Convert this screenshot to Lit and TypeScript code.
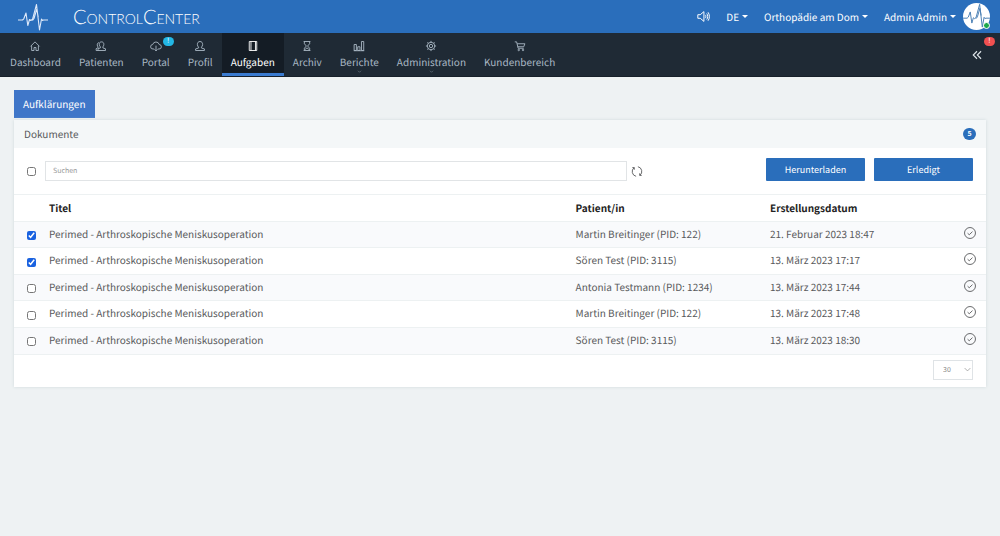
import { LitElement, html, css, svg, nothing } from "lit";
import { customElement, property, state } from "lit/decorators.js";
import { classMap } from "lit/directives/class-map.js";

const pulse = svg`<path d="M0 17h4.500l1.300-1.200L8 10l1.800 12.500 1.700-6 1.300 1 1.700-1.200L18.500 1.500l3 25.500 2-11 1 1.500 1-.5H30M14.500 17.500l1.500-2 2.800-9.500 1.400 8" />`;

const icons: Record<string, unknown> = {
  home: svg`<path d="M2 8.500 8 2.500l6 6M3.500 7.500V14h3.200v-4h2.600v4h3.200V7.500" />`,
  patients: svg`<path d="M8.700 2.500c2 0 3.100 1.400 3.100 3.300 0 1.500-.6 2.700-1.300 3.400v1.300l3.500 1.200V14H4v-2.300l3.200-1.200V9.200C6.300 8.500 5.700 7.300 5.700 5.800c0-1.900 1-3.300 3-3.300ZM5.500 3.500C3.800 3.600 3 4.800 3 6.400c0 1.300.5 2.200 1.100 2.900v1L1.500 11.600V14H4" />`,
  portal: svg`<path d="M5.500 12H4a3 3 0 0 1-.4-6A4.500 4.500 0 0 1 12.300 6 3 3 0 0 1 12 12h-1.500M8 7.500V14.500M6 12.500l2 2 2-2" />`,
  profile: svg`<path d="M8 2c2.300 0 3.500 1.600 3.500 3.900 0 1.600-.7 2.900-1.600 3.700v1.100l4 1.200V14H2.100v-2.100l4-1.200V9.600C5.200 8.800 4.500 7.500 4.500 5.900 4.500 3.600 5.700 2 8 2Z" />`,
  tasks: svg`<path d="M3 2h10v12H3zM5.300 2v12M11.300 2v12" />`,
  archive: svg`<path d="M3.500 2h9M3.500 14h9M4.500 2v3l2.700 3-2.700 3v3M11.500 2v3L8.800 8l2.700 3v3M5.500 12.500 8 10.500l2.500 2" />`,
  reports: svg`<path d="M1.500 6h3v8h-3zM6.300 9h3v5h-3zM11.300 2h3v12h-3zM1 14.300h14" />`,
  admin: svg`<circle cx="8" cy="8" r="2.200" /><circle cx="8" cy="8" r="5" /><path d="M8 1.200v2M8 12.800v2M1.200 8h2M12.800 8h2M3.200 3.200l1.400 1.400M11.400 11.400l1.400 1.400M12.800 3.200l-1.400 1.400M4.600 11.400l-1.400 1.400" />`,
  cart: svg`<path d="M1 2.500h2.500L5.500 11h7.500M4.200 5h10.300l-1.500 4H5" /><circle cx="6.300" cy="13.300" r="1" /><circle cx="12" cy="13.300" r="1" />`,
  sound: svg`<path d="M1 5.800h3l4.500-3.800v12L4 10.200H1zM10.300 6c.8 1.200.8 2.800 0 4M12 4.300c1.600 2.200 1.600 5.200 0 7.400M13.600 2.800c2.200 3 2.200 7.400 0 10.400" />`,
  collapse: svg`<path stroke-width="1.800" d="M8 2 2 8l6 6M14.500 2l-6 6 6 6" />`,
  refresh: svg`<path d="M6.800 14.400A6.500 6.500 0 0 1 4 3M9.200 1.600A6.500 6.500 0 0 1 12 13M1.800 2.800h2.600v2.800M14.200 13.200h-2.600v-2.800" />`,
  check: svg`<circle cx="8" cy="8" r="7.300" /><path d="m4.800 8.300 2.200 2 4.300-4.100" />`,
  chevron: svg`<path d="m3 5.500 5 5 5-5" />`,
};

@customElement("ui-icon")
class UiIcon extends LitElement {
  @property() name = "";

  static styles = css`
    :host { display: block; width: 12px; height: 12px; }
    svg { display: block; width: 100%; height: 100%; fill: none; stroke: currentColor; stroke-width: 1.2; }
  `;

  render() {
    return html`<svg viewBox="0 0 16 16" aria-hidden="true">${icons[this.name]}</svg>`;
  }
}

interface NavItem { label: string; icon: string; badge?: string; more?: boolean }
interface Doc { title: string; patient: string; date: string; done: boolean }

const nav: NavItem[] = [
  { label: "Dashboard", icon: "home" },
  { label: "Patienten", icon: "patients" },
  { label: "Portal", icon: "portal", badge: "!" },
  { label: "Profil", icon: "profile" },
  { label: "Aufgaben", icon: "tasks" },
  { label: "Archiv", icon: "archive" },
  { label: "Berichte", icon: "reports", more: true },
  { label: "Administration", icon: "admin", more: true },
  { label: "Kundenbereich", icon: "cart" },
];

const title = "Perimed - Arthroskopische Meniskusoperation";

@customElement("app-root")
class AppRoot extends LitElement {
  @state() private active = "Aufgaben";
  @state() private docs: Doc[] = [
    { title, patient: "Martin Breitinger (PID: 122)", date: "21. Februar 2023 18:47", done: true },
    { title, patient: "Sören Test (PID: 3115)", date: "13. März 2023 17:17", done: true },
    { title, patient: "Antonia Testmann (PID: 1234)", date: "13. März 2023 17:44", done: false },
    { title, patient: "Martin Breitinger (PID: 122)", date: "13. März 2023 17:48", done: false },
    { title, patient: "Sören Test (PID: 3115)", date: "13. März 2023 18:30", done: false },
  ];

  static styles = css`
    :host {
      display: block;
      min-height: 100vh;
      background: #eef2f3;
      color: #58595b;
      font: 10px/16px "Noto Sans CJK SC", "Noto Sans", sans-serif;
      text-rendering: geometricPrecision;
    }
    * { box-sizing: border-box; }
    button, input, select { font: inherit; color: inherit; margin: 0; text-rendering: inherit; }
    button { border: 0; padding: 0; background: none; cursor: pointer; }
    a { color: inherit; text-decoration: none; }

    .top { display: flex; align-items: center; height: 33px; padding: 0 10px 0 18px; background: #2a6ebb; color: #fff; }
    .brand { display: flex; align-items: center; gap: 25px; }
    .brand svg { width: 30px; height: 28px; color: #dfeafa; }
    .pulse { fill: none; stroke: currentColor; stroke-width: 1.1; stroke-linejoin: round; }
    .word { font: 300 20px/24px Lato, sans-serif; font-variant: small-caps; }
    .tools { display: flex; align-items: center; margin-left: auto; }
    .tools ui-icon { width: 13px; height: 13px; }
    .drop { display: flex; align-items: center; gap: 3px; margin-left: 16px; }
    .drop::after { content: ""; border: 3px solid transparent; border-top-color: currentColor; border-bottom: 0; }
    .avatar { position: relative; width: 27px; height: 27px; margin-left: 7px; border-radius: 50%; background: #fff; color: #4a7fb5; }
    .avatar svg { display: block; width: 27px; height: 25px; }
    .online { position: absolute; right: 0; bottom: 1px; width: 7px; height: 7px; border: 1px solid #fff; border-radius: 50%; background: #1da94a; }

    .nav { display: flex; height: 44px; padding-left: 1px; background: #1f2a35; color: #a9b8c4; border-bottom: 1px solid #17202a; }
    .item { position: relative; display: flex; flex-direction: column; align-items: center; padding: 7px 9px 0; }
    .item span { margin-top: 2px; }
    .item.active { color: #fff; background: #141c25; border-bottom: 3px solid #3a7bd0; }
    .more { position: absolute; bottom: 2px; width: 5px; height: 5px; }
    .badge { position: absolute; top: 4px; right: 5px; width: 11px; height: 9px; border-radius: 5px; background: #23b7e5; color: #fff; font-size: 7px; line-height: 9px; font-style: normal; text-align: center; }
    .collapse { position: relative; margin-left: auto; padding: 0 18px; color: #dfe6ea; }
    .collapse ui-icon { width: 10px; height: 10px; }
    .collapse .badge { background: #f05050; }

    main { padding: 13px 14px; }
    .tab { display: block; height: 28px; padding: 0 9px; background: #3f76c8; color: #fff; }
    .panel { margin-top: 2px; background: #fff; box-shadow: 0 0 3px #cfd8dc; }
    .head { display: flex; align-items: center; justify-content: space-between; height: 28px; padding: 0 10px; background: #f4f7f8; }
    h2 { margin: 0; font: inherit; }
    .count { width: 13px; border-radius: 6px; background: #2a6ebb; color: #fff; font-size: 7px; font-weight: 700; line-height: 12px; text-align: center; }
    .toolbar { display: flex; align-items: flex-start; gap: 9px; height: 46px; padding: 10px 13px; }
    .find { display: flex; align-items: center; gap: 4px; flex: 1; padding-top: 3px; }
    .find ui-icon { width: 12px; height: 13px; }
    .tick { display: block; width: 9px; height: 9px; accent-color: #1a62e0; }
    .find .tick { margin-right: 5px; }
    .search { width: 582px; height: 20px; padding: 0 7px; border: 1px solid #e1e4e6; background: #fff; font-size: 7px; outline: 0; }
    .search::placeholder { color: #999; opacity: 1; }
    .primary { width: 99px; height: 23px; border-radius: 1px; background: #2a6ebb; color: #fff; font-size: 9px; }

    table { width: 100%; table-layout: fixed; border-collapse: collapse; }
    th, td { height: 26px; padding: 0; border-top: 1px solid #edf1f2; text-align: left; }
    th { height: 27px; color: #222; font-weight: 700; }
    td { padding-bottom: 2px; }
    tbody tr:nth-child(odd) { background: #f9fafc; }
    tbody tr:nth-child(even) td { height: 27px; }
    .c-tick { width: 35px; }
    .c-patient { width: 20%; }
    .c-date { width: 170px; }
    .c-act { width: 46px; }
    td .tick { margin: 4px 0 0 13px; }
    .finish { display: block; margin: 0 10px 2px auto; }
    .foot { display: flex; justify-content: flex-end; padding: 5px 13px 7px; border-top: 1px solid #edf1f2; }
    .size { display: grid; align-items: center; justify-items: end; color: #888; }
    .size select { grid-area: 1 / 1; width: 40px; height: 20px; padding: 0 9px; border: 1px solid #dfe3e6; border-radius: 0; background: #fff; appearance: none; font-size: 7px; }
    .size ui-icon { grid-area: 1 / 1; width: 9px; height: 9px; margin-right: 1px; pointer-events: none; }
  `;

  private toggle(i: number) {
    this.docs = this.docs.map((d, n) => (n === i ? { ...d, done: !d.done } : d));
  }

  private toggleAll(e: Event) {
    const done = (e.target as HTMLInputElement).checked;
    this.docs = this.docs.map((d) => ({ ...d, done }));
  }

  render() {
    return html`
      <header class="top">
        <a class="brand" href="#">
          <svg class="pulse" viewBox="0 0 30 28" aria-hidden="true">${pulse}</svg>
          <span class="word">ControlCenter</span>
        </a>
        <div class="tools">
          <button aria-label="Ton"><ui-icon name="sound"></ui-icon></button>
          <button class="drop">DE</button>
          <button class="drop">Orthopädie am Dom</button>
          <button class="drop">Admin Admin</button>
          <div class="avatar">
            <svg class="pulse" viewBox="0 0 30 28" aria-hidden="true">${pulse}</svg>
            <i class="online"></i>
          </div>
        </div>
      </header>
      <nav class="nav">
        ${nav.map((n) => html`
          <a href="#" class=${classMap({ item: true, active: n.label === this.active })} @click=${() => (this.active = n.label)}>
            <ui-icon name=${n.icon}></ui-icon>
            <span>${n.label}</span>
            ${n.badge ? html`<i class="badge">${n.badge}</i>` : nothing}
            ${n.more ? html`<ui-icon class="more" name="chevron"></ui-icon>` : nothing}
          </a>`)}
        <button class="collapse" aria-label="Einklappen">
          <ui-icon name="collapse"></ui-icon><i class="badge">!</i>
        </button>
      </nav>
      <main>
        <button class="tab">Aufklärungen</button>
        <section class="panel">
          <div class="head"><h2>Dokumente</h2><span class="count">5</span></div>
          <div class="toolbar">
            <div class="find">
              <input class="tick" type="checkbox" aria-label="Alle auswählen" @change=${this.toggleAll} />
              <input class="search" type="text" placeholder="Suchen" aria-label="Suchen" />
              <button aria-label="Aktualisieren"><ui-icon name="refresh"></ui-icon></button>
            </div>
            <button class="primary">Herunterladen</button>
            <button class="primary">Erledigt</button>
          </div>
          <table>
            <thead>
              <tr>
                <th class="c-tick"></th>
                <th>Titel</th>
                <th class="c-patient">Patient/in</th>
                <th class="c-date">Erstellungsdatum</th>
                <th class="c-act"></th>
              </tr>
            </thead>
            <tbody>
              ${this.docs.map((d, i) => html`
                <tr>
                  <td><input class="tick" type="checkbox" aria-label="Dokument auswählen" .checked=${d.done} @change=${() => this.toggle(i)} /></td>
                  <td>${d.title}</td>
                  <td>${d.patient}</td>
                  <td>${d.date}</td>
                  <td><button class="finish" aria-label="Erledigt"><ui-icon name="check"></ui-icon></button></td>
                </tr>`)}
            </tbody>
          </table>
          <div class="foot">
            <label class="size">
              <select aria-label="Einträge pro Seite"><option>30</option><option>50</option><option>100</option></select>
              <ui-icon name="chevron"></ui-icon>
            </label>
          </div>
        </section>
      </main>
    `;
  }
}
